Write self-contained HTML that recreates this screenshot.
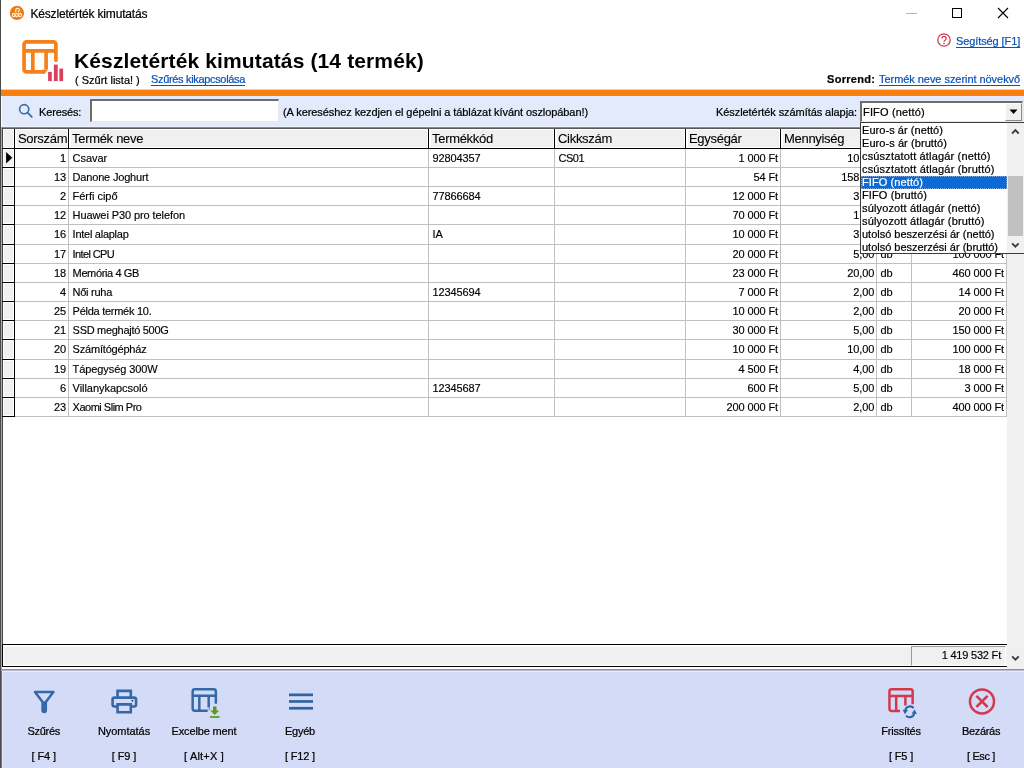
<!DOCTYPE html>
<html>
<head>
<meta charset="utf-8">
<title>Készletérték kimutatás</title>
<style>
*{box-sizing:border-box;margin:0;padding:0}
html,body{width:1024px;height:768px;overflow:hidden;background:#fff}
body{font-family:"Liberation Sans",sans-serif;font-size:11px;color:#000;position:relative}
.a{position:absolute}
.t{position:absolute;white-space:pre;line-height:14px;height:14px;-webkit-text-stroke:0.22px}
.lnk{color:#0b52b8;text-decoration:underline;text-underline-offset:1.5px}
/* grid */
#grid{position:absolute;left:2px;top:127px;width:1022px;height:543px;background:#fff}
.hl{position:absolute;left:13px;height:1px;background:#c0c0c0;width:992px}
.vl{position:absolute;top:22px;width:1px;background:#c0c0c0;height:268px}
.hd{position:absolute;top:1px;height:20px;background:#f0f0f0;font-size:13px;line-height:20px;padding-left:3px;white-space:pre;border-right:1px solid #000;border-left:1px solid #fff;border-top:1px solid #fff}
.c{position:absolute;white-space:pre;font-size:11px;line-height:14px;height:14px;-webkit-text-stroke:0.15px}
.r{text-align:right}
.ind{position:absolute;left:0;width:12px;background:#f0f0f0;border-left:1px solid #fff;border-top:1px solid #fff}
.dd{position:absolute;left:1px;white-space:pre;font-size:11px;line-height:13px;height:13px;-webkit-text-stroke:0.22px}
.bt{position:absolute;white-space:pre;font-size:11px;line-height:14px;height:14px;text-align:center;width:100px;-webkit-text-stroke:0.22px}
</style>
</head>
<body>
<div id="w" style="position:absolute;left:0;top:0;width:1024px;height:768px;will-change:transform">
<!-- window left border -->
<div class="a" style="left:0;top:0;width:1px;height:768px;background:#4a4a4a"></div>

<!-- title bar -->
<svg class="a" style="left:6px;top:2px" width="24" height="24" viewBox="6 2 24 24">
  <circle cx="16.950" cy="12.950" r="7.150" fill="#e87d18"/>
  <g fill="none" stroke="#fff4cf" stroke-width="1.150">
    <path d="M15.800 12.300V9.600a1.300 1.300 0 0 1 1.300-1.300h.6a1.700 1.700 0 0 1 1.200 2.900l-1 1.100"/>
    <ellipse cx="13.700" cy="15" rx="1.350" ry="1.700"/><ellipse cx="16.900" cy="15.100" rx="1.350" ry="1.600"/><ellipse cx="20.100" cy="15" rx="1.350" ry="1.700"/>
  </g>
</svg>
<div class="t" style="left:30.400px;top:7px;font-size:12px;line-height:15px;height:15px;letter-spacing:-0.17px">Készletérték kimutatás</div>
<div class="a" style="left:906px;top:13px;width:11px;height:1px;background:#b5b5b5"></div>
<div class="a" style="left:952px;top:8px;width:10px;height:10px;border:1px solid #000"></div>
<svg class="a" style="left:997px;top:7px" width="12" height="12" viewBox="0 0 12 12"><path d="M1 1l10 10M11 1L1 11" stroke="#000" stroke-width="1.1" fill="none"/></svg>

<!-- header -->
<svg class="a" style="left:16px;top:34px" width="56" height="56" viewBox="16 34 56 56">
  <g fill="none" stroke="#f6811a" stroke-width="3.7" stroke-linecap="round" stroke-linejoin="round">
    <path d="M55.9 60.200V44.300a2.500 2.500 0 0 0-2.500-2.500H26.550a2.500 2.500 0 0 0-2.500 2.500V69.400a2.500 2.500 0 0 0 2.500 2.500H43"/>
    <path d="M24.500 50.800H55.500M32.800 51V71.500M46.100 51V69.500" stroke-linecap="butt"/>
    <path d="M42.500 73.750h2.300l3.150-4.250h-5.450z" fill="#f6811a" stroke="none"/>
  </g>
  <rect x="48.100" y="71.900" width="3.700" height="9.200" fill="#d8405c"/>
  <rect x="53.900" y="64.600" width="3.800" height="16.500" fill="#d8405c"/>
  <rect x="59.400" y="68.600" width="3.700" height="12.500" fill="#d8405c"/>
</svg>
<div class="t" style="left:74px;top:48px;font-size:21px;font-weight:bold;line-height:26px;height:26px;letter-spacing:0.13px;-webkit-text-stroke:0">Készletérték kimutatás (14 termék)</div>
<div class="t" style="left:75px;top:73px">( Szűrt lista! )</div>
<div class="t lnk" style="left:151px;top:72px;letter-spacing:-0.33px">Szűrés kikapcsolása</div>
<svg class="a" style="left:936px;top:32px" width="16" height="16" viewBox="0 0 16 16">
  <circle cx="8" cy="8" r="6.2" fill="none" stroke="#d23a4c" stroke-width="1.3"/>
  <path d="M5.9 6.4a2.1 2.1 0 1 1 3.2 1.8c-.7.4-1.1.8-1.1 1.6" fill="none" stroke="#d23a4c" stroke-width="1.3"/>
  <rect x="7.3" y="10.8" width="1.4" height="1.4" fill="#d23a4c"/>
</svg>
<div class="t lnk" style="left:956px;top:34px;letter-spacing:-0.1px">Segítség [F1]</div>
<div class="t" style="left:827px;top:72px;font-weight:bold;letter-spacing:0.3px">Sorrend:</div>
<div class="t lnk" style="left:879px;top:72px;letter-spacing:-0.05px">Termék neve szerint növekvő</div>

<!-- orange bar -->
<div class="a" style="left:1px;top:89px;width:1023px;height:1px;background:#fccf9f"></div>
<div class="a" style="left:1px;top:90px;width:1023px;height:6px;background:#f9800f"></div>

<!-- search panel -->
<div class="a" style="left:2px;top:96px;width:1022px;height:31px;background:#e3eafb"></div>
<svg class="a" style="left:17px;top:102px" width="18" height="18" viewBox="0 0 18 18">
  <circle cx="7.2" cy="7.2" r="4.6" fill="none" stroke="#3a6ea8" stroke-width="1.6"/>
  <path d="M10.6 10.6l4.2 4.2" stroke="#3a6ea8" stroke-width="1.8" stroke-linecap="round"/>
</svg>
<div class="t" style="left:39px;top:105px;letter-spacing:-0.15px">Keresés:</div>
<div class="a" style="left:90px;top:99px;width:189px;height:23px;background:#fff;border-top:2px solid #6d6d6d;border-left:2px solid #6d6d6d;border-right:1px solid #e8e8e8;border-bottom:1px solid #e8e8e8"></div>
<div class="t" style="left:283px;top:105px;letter-spacing:-0.08px">(A kereséshez kezdjen el gépelni a táblázat kívánt oszlopában!)</div>
<div class="t" style="left:716px;top:105px;letter-spacing:-0.07px">Készletérték számítás alapja:</div>
<!-- combo -->
<div class="a" style="left:860px;top:101px;width:163px;height:21px;background:#fff;border-top:2px solid #6d6d6d;border-left:2px solid #6d6d6d;border-right:1px solid #e8e8e8;border-bottom:1px solid #e8e8e8"></div>
<div class="t" style="left:863px;top:105px;font-size:11px;letter-spacing:0.16px">FIFO (nettó)</div>
<div class="a" style="left:1005px;top:103px;width:17px;height:18px;background:#f0f0f0;border:1px solid #fdfdfd;border-right-color:#8a8a8a;border-bottom-color:#8a8a8a"></div>
<svg class="a" style="left:1009px;top:109px" width="9" height="6" viewBox="0 0 9 6"><path d="M0.5 0.5h8L4.5 5z" fill="#000"/></svg>

<div class="a" style="left:1px;top:127px;width:1023px;height:543px;background:#fff"></div>
<div class="a" style="left:1px;top:126px;width:1023px;height:1px;background:#eef2fe"></div>
<div class="a" style="left:1px;top:127px;width:1023px;height:1px;background:#868a92"></div>
<div class="a" style="left:1px;top:128px;width:1023px;height:1px;background:#56585e"></div>
<div class="a" style="left:1px;top:127px;width:1px;height:543px;background:#a8a8a8"></div>
<div class="a" style="left:2px;top:128px;width:1px;height:541px;background:#444"></div>
<div class="a" style="left:1007px;top:129px;width:17px;height:540px;background:#f0f0f0"></div>
<svg class="a" style="left:1010px;top:653px" width="11" height="9" viewBox="0 0 11 9"><path d="M2.100 3.300L5.400 6.700l3.300-3.400" fill="none" stroke="#404040" stroke-width="1.900"/></svg>
<div class="a" style="left:3px;top:129px;width:11px;height:19px;background:#f0f0f0;border-left:1px solid #fff;border-top:1px solid #fff;border-right:1px solid #fff;border-bottom:1px solid #fff"></div>
<div class="a" style="left:14px;top:129px;width:1px;height:20px;background:#000"></div>
<div class="a" style="left:15px;top:129px;width:53px;height:19px;background:#f0f0f0;border-left:2px solid #fff;border-top:1px solid #fff;border-right:1px solid #fff;border-bottom:1px solid #fff"></div>
<div class="a" style="left:68px;top:129px;width:1px;height:20px;background:#000"></div>
<div class="t" style="left:18px;top:131px;font-size:13px;line-height:16px;height:16px;letter-spacing:-0.3px;-webkit-text-stroke:0.1px">Sorszám</div>
<div class="a" style="left:69px;top:129px;width:359px;height:19px;background:#f0f0f0;border-left:2px solid #fff;border-top:1px solid #fff;border-right:1px solid #fff;border-bottom:1px solid #fff"></div>
<div class="a" style="left:428px;top:129px;width:1px;height:20px;background:#000"></div>
<div class="t" style="left:72px;top:131px;font-size:13px;line-height:16px;height:16px;letter-spacing:-0.3px;-webkit-text-stroke:0.1px">Termék neve</div>
<div class="a" style="left:429px;top:129px;width:125px;height:19px;background:#f0f0f0;border-left:2px solid #fff;border-top:1px solid #fff;border-right:1px solid #fff;border-bottom:1px solid #fff"></div>
<div class="a" style="left:554px;top:129px;width:1px;height:20px;background:#000"></div>
<div class="t" style="left:432px;top:131px;font-size:13px;line-height:16px;height:16px;letter-spacing:-0.3px;-webkit-text-stroke:0.1px">Termékkód</div>
<div class="a" style="left:555px;top:129px;width:130px;height:19px;background:#f0f0f0;border-left:2px solid #fff;border-top:1px solid #fff;border-right:1px solid #fff;border-bottom:1px solid #fff"></div>
<div class="a" style="left:685px;top:129px;width:1px;height:20px;background:#000"></div>
<div class="t" style="left:558px;top:131px;font-size:13px;line-height:16px;height:16px;letter-spacing:-0.3px;-webkit-text-stroke:0.1px">Cikkszám</div>
<div class="a" style="left:686px;top:129px;width:94px;height:19px;background:#f0f0f0;border-left:2px solid #fff;border-top:1px solid #fff;border-right:1px solid #fff;border-bottom:1px solid #fff"></div>
<div class="a" style="left:780px;top:129px;width:1px;height:20px;background:#000"></div>
<div class="t" style="left:689px;top:131px;font-size:13px;line-height:16px;height:16px;letter-spacing:-0.3px;-webkit-text-stroke:0.1px">Egységár</div>
<div class="a" style="left:781px;top:129px;width:95px;height:19px;background:#f0f0f0;border-left:2px solid #fff;border-top:1px solid #fff;border-right:1px solid #fff;border-bottom:1px solid #fff"></div>
<div class="a" style="left:876px;top:129px;width:1px;height:20px;background:#000"></div>
<div class="t" style="left:784px;top:131px;font-size:13px;line-height:16px;height:16px;letter-spacing:-0.3px;-webkit-text-stroke:0.1px">Mennyiség</div>
<div class="a" style="left:877px;top:129px;width:34px;height:19px;background:#f0f0f0;border-left:2px solid #fff;border-top:1px solid #fff;border-right:1px solid #fff;border-bottom:1px solid #fff"></div>
<div class="a" style="left:911px;top:129px;width:1px;height:20px;background:#000"></div>
<div class="a" style="left:912px;top:129px;width:94px;height:19px;background:#f0f0f0;border-left:2px solid #fff;border-top:1px solid #fff;border-right:1px solid #fff;border-bottom:1px solid #fff"></div>
<div class="a" style="left:1006px;top:129px;width:1px;height:20px;background:#000"></div>
<div class="t" style="left:915px;top:131px;font-size:13px;line-height:16px;height:16px;letter-spacing:-0.3px;-webkit-text-stroke:0.1px">Készletérték</div>
<div class="a" style="left:2px;top:148px;width:1005px;height:1px;background:#000"></div>
<div class="a" style="left:3px;top:149px;width:11px;height:18px;background:#f0f0f0;border-left:1px solid #fff;border-top:1px solid #fff;border-right:1px solid #fff;border-bottom:1px solid #fff"></div>
<div class="a" style="left:2px;top:167px;width:13px;height:1px;background:#000"></div>
<div class="a" style="left:15px;top:167px;width:992px;height:1px;background:#c0c0c0"></div>
<div class="c r" style="left:15px;width:51px;top:151px;letter-spacing:-0.12px">1</div>
<div class="c" style="left:72.6px;top:151px;letter-spacing:-0.057px">Csavar</div>
<div class="c" style="left:432.6px;top:151px;letter-spacing:-0.12px">92804357</div>
<div class="c" style="left:558.4px;top:151px;letter-spacing:-0.45px">CS01</div>
<div class="c r" style="left:686px;width:92px;top:151px;letter-spacing:-0.12px">1 000 Ft</div>
<div class="c r" style="left:781.2px;width:93.0px;top:151px;letter-spacing:-0.12px">10,00</div>
<div class="c" style="left:880.6px;top:151px;letter-spacing:-0.12px">db</div>
<div class="c r" style="left:912px;width:92px;top:151px;letter-spacing:-0.12px">10 000 Ft</div>
<div class="a" style="left:3px;top:168px;width:11px;height:18px;background:#f0f0f0;border-left:1px solid #fff;border-top:1px solid #fff;border-right:1px solid #fff;border-bottom:1px solid #fff"></div>
<div class="a" style="left:2px;top:186px;width:13px;height:1px;background:#000"></div>
<div class="a" style="left:15px;top:186px;width:992px;height:1px;background:#c0c0c0"></div>
<div class="c r" style="left:15px;width:51px;top:170px;letter-spacing:-0.12px">13</div>
<div class="c" style="left:72.6px;top:170px;letter-spacing:-0.184px">Danone Joghurt</div>
<div class="c r" style="left:686px;width:92px;top:170px;letter-spacing:-0.12px">54 Ft</div>
<div class="c r" style="left:781.2px;width:93.0px;top:170px;letter-spacing:-0.12px">158,00</div>
<div class="c" style="left:880.6px;top:170px;letter-spacing:-0.12px">db</div>
<div class="c r" style="left:912px;width:92px;top:170px;letter-spacing:-0.12px">8 532 Ft</div>
<div class="a" style="left:3px;top:187px;width:11px;height:18px;background:#f0f0f0;border-left:1px solid #fff;border-top:1px solid #fff;border-right:1px solid #fff;border-bottom:1px solid #fff"></div>
<div class="a" style="left:2px;top:205px;width:13px;height:1px;background:#000"></div>
<div class="a" style="left:15px;top:205px;width:992px;height:1px;background:#c0c0c0"></div>
<div class="c r" style="left:15px;width:51px;top:189px;letter-spacing:-0.12px">2</div>
<div class="c" style="left:72.6px;top:189px;letter-spacing:-0.034px">Férfi cipő</div>
<div class="c" style="left:432.6px;top:189px;letter-spacing:-0.12px">77866684</div>
<div class="c r" style="left:686px;width:92px;top:189px;letter-spacing:-0.12px">12 000 Ft</div>
<div class="c r" style="left:781.2px;width:93.0px;top:189px;letter-spacing:-0.12px">3,00</div>
<div class="c" style="left:880.6px;top:189px;letter-spacing:-0.12px">db</div>
<div class="c r" style="left:912px;width:92px;top:189px;letter-spacing:-0.12px">36 000 Ft</div>
<div class="a" style="left:3px;top:206px;width:11px;height:18px;background:#f0f0f0;border-left:1px solid #fff;border-top:1px solid #fff;border-right:1px solid #fff;border-bottom:1px solid #fff"></div>
<div class="a" style="left:2px;top:224px;width:13px;height:1px;background:#000"></div>
<div class="a" style="left:15px;top:224px;width:992px;height:1px;background:#c0c0c0"></div>
<div class="c r" style="left:15px;width:51px;top:208px;letter-spacing:-0.12px">12</div>
<div class="c" style="left:72.6px;top:208px;letter-spacing:-0.089px">Huawei P30 pro telefon</div>
<div class="c r" style="left:686px;width:92px;top:208px;letter-spacing:-0.12px">70 000 Ft</div>
<div class="c r" style="left:781.2px;width:93.0px;top:208px;letter-spacing:-0.12px">1,00</div>
<div class="c" style="left:880.6px;top:208px;letter-spacing:-0.12px">db</div>
<div class="c r" style="left:912px;width:92px;top:208px;letter-spacing:-0.12px">70 000 Ft</div>
<div class="a" style="left:3px;top:225px;width:11px;height:19px;background:#f0f0f0;border-left:1px solid #fff;border-top:1px solid #fff;border-right:1px solid #fff;border-bottom:1px solid #fff"></div>
<div class="a" style="left:2px;top:244px;width:13px;height:1px;background:#000"></div>
<div class="a" style="left:15px;top:244px;width:992px;height:1px;background:#c0c0c0"></div>
<div class="c r" style="left:15px;width:51px;top:227px;letter-spacing:-0.12px">16</div>
<div class="c" style="left:72.6px;top:227px;letter-spacing:-0.263px">Intel alaplap</div>
<div class="c" style="left:432.6px;top:227px;letter-spacing:-0.12px">IA</div>
<div class="c r" style="left:686px;width:92px;top:227px;letter-spacing:-0.12px">10 000 Ft</div>
<div class="c r" style="left:781.2px;width:93.0px;top:227px;letter-spacing:-0.12px">3,00</div>
<div class="c" style="left:880.6px;top:227px;letter-spacing:-0.12px">db</div>
<div class="c r" style="left:912px;width:92px;top:227px;letter-spacing:-0.12px">30 000 Ft</div>
<div class="a" style="left:3px;top:245px;width:11px;height:18px;background:#f0f0f0;border-left:1px solid #fff;border-top:1px solid #fff;border-right:1px solid #fff;border-bottom:1px solid #fff"></div>
<div class="a" style="left:2px;top:263px;width:13px;height:1px;background:#000"></div>
<div class="a" style="left:15px;top:263px;width:992px;height:1px;background:#c0c0c0"></div>
<div class="c r" style="left:15px;width:51px;top:247px;letter-spacing:-0.12px">17</div>
<div class="c" style="left:72.6px;top:247px;letter-spacing:-0.630px">Intel CPU</div>
<div class="c r" style="left:686px;width:92px;top:247px;letter-spacing:-0.12px">20 000 Ft</div>
<div class="c r" style="left:781.2px;width:93.0px;top:247px;letter-spacing:-0.12px">5,00</div>
<div class="c" style="left:880.6px;top:247px;letter-spacing:-0.12px">db</div>
<div class="c r" style="left:912px;width:92px;top:247px;letter-spacing:-0.12px">100 000 Ft</div>
<div class="a" style="left:3px;top:264px;width:11px;height:18px;background:#f0f0f0;border-left:1px solid #fff;border-top:1px solid #fff;border-right:1px solid #fff;border-bottom:1px solid #fff"></div>
<div class="a" style="left:2px;top:282px;width:13px;height:1px;background:#000"></div>
<div class="a" style="left:15px;top:282px;width:992px;height:1px;background:#c0c0c0"></div>
<div class="c r" style="left:15px;width:51px;top:266px;letter-spacing:-0.12px">18</div>
<div class="c" style="left:72.6px;top:266px;letter-spacing:-0.376px">Memória 4 GB</div>
<div class="c r" style="left:686px;width:92px;top:266px;letter-spacing:-0.12px">23 000 Ft</div>
<div class="c r" style="left:781.2px;width:93.0px;top:266px;letter-spacing:-0.12px">20,00</div>
<div class="c" style="left:880.6px;top:266px;letter-spacing:-0.12px">db</div>
<div class="c r" style="left:912px;width:92px;top:266px;letter-spacing:-0.12px">460 000 Ft</div>
<div class="a" style="left:3px;top:283px;width:11px;height:18px;background:#f0f0f0;border-left:1px solid #fff;border-top:1px solid #fff;border-right:1px solid #fff;border-bottom:1px solid #fff"></div>
<div class="a" style="left:2px;top:301px;width:13px;height:1px;background:#000"></div>
<div class="a" style="left:15px;top:301px;width:992px;height:1px;background:#c0c0c0"></div>
<div class="c r" style="left:15px;width:51px;top:285px;letter-spacing:-0.12px">4</div>
<div class="c" style="left:72.6px;top:285px;letter-spacing:-0.272px">Női ruha</div>
<div class="c" style="left:432.6px;top:285px;letter-spacing:-0.12px">12345694</div>
<div class="c r" style="left:686px;width:92px;top:285px;letter-spacing:-0.12px">7 000 Ft</div>
<div class="c r" style="left:781.2px;width:93.0px;top:285px;letter-spacing:-0.12px">2,00</div>
<div class="c" style="left:880.6px;top:285px;letter-spacing:-0.12px">db</div>
<div class="c r" style="left:912px;width:92px;top:285px;letter-spacing:-0.12px">14 000 Ft</div>
<div class="a" style="left:3px;top:302px;width:11px;height:18px;background:#f0f0f0;border-left:1px solid #fff;border-top:1px solid #fff;border-right:1px solid #fff;border-bottom:1px solid #fff"></div>
<div class="a" style="left:2px;top:320px;width:13px;height:1px;background:#000"></div>
<div class="a" style="left:15px;top:320px;width:992px;height:1px;background:#c0c0c0"></div>
<div class="c r" style="left:15px;width:51px;top:304px;letter-spacing:-0.12px">25</div>
<div class="c" style="left:72.6px;top:304px;letter-spacing:-0.266px">Példa termék 10.</div>
<div class="c r" style="left:686px;width:92px;top:304px;letter-spacing:-0.12px">10 000 Ft</div>
<div class="c r" style="left:781.2px;width:93.0px;top:304px;letter-spacing:-0.12px">2,00</div>
<div class="c" style="left:880.6px;top:304px;letter-spacing:-0.12px">db</div>
<div class="c r" style="left:912px;width:92px;top:304px;letter-spacing:-0.12px">20 000 Ft</div>
<div class="a" style="left:3px;top:321px;width:11px;height:18px;background:#f0f0f0;border-left:1px solid #fff;border-top:1px solid #fff;border-right:1px solid #fff;border-bottom:1px solid #fff"></div>
<div class="a" style="left:2px;top:339px;width:13px;height:1px;background:#000"></div>
<div class="a" style="left:15px;top:339px;width:992px;height:1px;background:#c0c0c0"></div>
<div class="c r" style="left:15px;width:51px;top:323px;letter-spacing:-0.12px">21</div>
<div class="c" style="left:72.6px;top:323px;letter-spacing:-0.294px">SSD meghajtó 500G</div>
<div class="c r" style="left:686px;width:92px;top:323px;letter-spacing:-0.12px">30 000 Ft</div>
<div class="c r" style="left:781.2px;width:93.0px;top:323px;letter-spacing:-0.12px">5,00</div>
<div class="c" style="left:880.6px;top:323px;letter-spacing:-0.12px">db</div>
<div class="c r" style="left:912px;width:92px;top:323px;letter-spacing:-0.12px">150 000 Ft</div>
<div class="a" style="left:3px;top:340px;width:11px;height:19px;background:#f0f0f0;border-left:1px solid #fff;border-top:1px solid #fff;border-right:1px solid #fff;border-bottom:1px solid #fff"></div>
<div class="a" style="left:2px;top:359px;width:13px;height:1px;background:#000"></div>
<div class="a" style="left:15px;top:359px;width:992px;height:1px;background:#c0c0c0"></div>
<div class="c r" style="left:15px;width:51px;top:342px;letter-spacing:-0.12px">20</div>
<div class="c" style="left:72.6px;top:342px;letter-spacing:-0.195px">Számítógépház</div>
<div class="c r" style="left:686px;width:92px;top:342px;letter-spacing:-0.12px">10 000 Ft</div>
<div class="c r" style="left:781.2px;width:93.0px;top:342px;letter-spacing:-0.12px">10,00</div>
<div class="c" style="left:880.6px;top:342px;letter-spacing:-0.12px">db</div>
<div class="c r" style="left:912px;width:92px;top:342px;letter-spacing:-0.12px">100 000 Ft</div>
<div class="a" style="left:3px;top:360px;width:11px;height:18px;background:#f0f0f0;border-left:1px solid #fff;border-top:1px solid #fff;border-right:1px solid #fff;border-bottom:1px solid #fff"></div>
<div class="a" style="left:2px;top:378px;width:13px;height:1px;background:#000"></div>
<div class="a" style="left:15px;top:378px;width:992px;height:1px;background:#c0c0c0"></div>
<div class="c r" style="left:15px;width:51px;top:362px;letter-spacing:-0.12px">19</div>
<div class="c" style="left:72.6px;top:362px;letter-spacing:-0.094px">Tápegység 300W</div>
<div class="c r" style="left:686px;width:92px;top:362px;letter-spacing:-0.12px">4 500 Ft</div>
<div class="c r" style="left:781.2px;width:93.0px;top:362px;letter-spacing:-0.12px">4,00</div>
<div class="c" style="left:880.6px;top:362px;letter-spacing:-0.12px">db</div>
<div class="c r" style="left:912px;width:92px;top:362px;letter-spacing:-0.12px">18 000 Ft</div>
<div class="a" style="left:3px;top:379px;width:11px;height:18px;background:#f0f0f0;border-left:1px solid #fff;border-top:1px solid #fff;border-right:1px solid #fff;border-bottom:1px solid #fff"></div>
<div class="a" style="left:2px;top:397px;width:13px;height:1px;background:#000"></div>
<div class="a" style="left:15px;top:397px;width:992px;height:1px;background:#c0c0c0"></div>
<div class="c r" style="left:15px;width:51px;top:381px;letter-spacing:-0.12px">6</div>
<div class="c" style="left:72.6px;top:381px;letter-spacing:-0.048px">Villanykapcsoló</div>
<div class="c" style="left:432.6px;top:381px;letter-spacing:-0.12px">12345687</div>
<div class="c r" style="left:686px;width:92px;top:381px;letter-spacing:-0.12px">600 Ft</div>
<div class="c r" style="left:781.2px;width:93.0px;top:381px;letter-spacing:-0.12px">5,00</div>
<div class="c" style="left:880.6px;top:381px;letter-spacing:-0.12px">db</div>
<div class="c r" style="left:912px;width:92px;top:381px;letter-spacing:-0.12px">3 000 Ft</div>
<div class="a" style="left:3px;top:398px;width:11px;height:18px;background:#f0f0f0;border-left:1px solid #fff;border-top:1px solid #fff;border-right:1px solid #fff;border-bottom:1px solid #fff"></div>
<div class="a" style="left:2px;top:416px;width:13px;height:1px;background:#000"></div>
<div class="a" style="left:15px;top:416px;width:992px;height:1px;background:#c0c0c0"></div>
<div class="c r" style="left:15px;width:51px;top:400px;letter-spacing:-0.12px">23</div>
<div class="c" style="left:72.6px;top:400px;letter-spacing:-0.493px">Xaomi Slim Pro</div>
<div class="c r" style="left:686px;width:92px;top:400px;letter-spacing:-0.12px">200 000 Ft</div>
<div class="c r" style="left:781.2px;width:93.0px;top:400px;letter-spacing:-0.12px">2,00</div>
<div class="c" style="left:880.6px;top:400px;letter-spacing:-0.12px">db</div>
<div class="c r" style="left:912px;width:92px;top:400px;letter-spacing:-0.12px">400 000 Ft</div>
<div class="a" style="left:14px;top:149px;width:1px;height:268px;background:#000"></div>
<div class="a" style="left:68px;top:149px;width:1px;height:268px;background:#c0c0c0"></div>
<div class="a" style="left:428px;top:149px;width:1px;height:268px;background:#c0c0c0"></div>
<div class="a" style="left:554px;top:149px;width:1px;height:268px;background:#c0c0c0"></div>
<div class="a" style="left:685px;top:149px;width:1px;height:268px;background:#c0c0c0"></div>
<div class="a" style="left:780px;top:149px;width:1px;height:268px;background:#c0c0c0"></div>
<div class="a" style="left:876px;top:149px;width:1px;height:268px;background:#c0c0c0"></div>
<div class="a" style="left:911px;top:149px;width:1px;height:268px;background:#c0c0c0"></div>
<div class="a" style="left:1006px;top:149px;width:1px;height:268px;background:#c0c0c0"></div>
<svg class="a" style="left:5px;top:151px" width="9" height="14" viewBox="0 0 9 14"><path d="M1.100 0.900v11.600l6.200-5.800z" fill="#000"/></svg>
<div class="a" style="left:2px;top:644px;width:1005px;height:1px;background:#000"></div>
<div class="a" style="left:2px;top:645px;width:1005px;height:21px;background:#f0f0f0;border-left:1px solid #000;box-shadow:inset 1px 2px 0 #fff, inset 0 -1px 0 #fff"></div>
<div class="a" style="left:2px;top:666px;width:1005px;height:1px;background:#000"></div>
<div class="a" style="left:2px;top:667px;width:1005px;height:2px;background:#fff"></div>
<div class="a" style="left:1px;top:669px;width:1023px;height:1px;background:#8f9195"></div>
<div class="a" style="left:911px;top:646px;width:95px;height:20px;background:#f0f0f0;border-left:1px solid #9a9a9a;border-top:1px solid #9a9a9a;border-bottom:1px solid #fff;border-right:1px solid #fff"></div>
<div class="c r" style="left:912px;width:89px;top:648px;letter-spacing:-0.2px">1 419 532 Ft</div>
<div class="a" style="left:860px;top:122px;width:165px;height:132px;background:#fff;border:1px solid #3c3c3c"></div>
<div class="a" style="left:1007px;top:123px;width:17px;height:130px;background:#f0f0f0"></div>
<div class="a" style="left:1008px;top:176px;width:15px;height:60px;background:#c1c1c1"></div>
<svg class="a" style="left:1010px;top:127px" width="11" height="9" viewBox="0 0 11 9"><path d="M2.100 6.500L5.400 3.100l3.300 3.400" fill="none" stroke="#404040" stroke-width="1.900"/></svg>
<svg class="a" style="left:1010px;top:240px" width="11" height="9" viewBox="0 0 11 9"><path d="M2.100 3.300L5.400 6.700l3.300-3.400" fill="none" stroke="#404040" stroke-width="1.900"/></svg>
<div class="dd" style="left:862px;top:124px;letter-spacing:0.054px">Euro-s ár (nettó)</div>
<div class="dd" style="left:862px;top:137px;letter-spacing:0.069px">Euro-s ár (bruttó)</div>
<div class="dd" style="left:862px;top:150px;letter-spacing:0.162px">csúsztatott átlagár (nettó)</div>
<div class="dd" style="left:862px;top:163px;letter-spacing:0.169px">csúsztatott átlagár (bruttó)</div>
<div class="a" style="left:861px;top:176px;width:146px;height:13px;background:#0a6ad6;outline:1px dotted #7fa8e0;outline-offset:-1px"></div>
<div class="dd" style="left:862px;top:176px;letter-spacing:0.092px;color:#fff">FIFO (nettó)</div>
<div class="dd" style="left:862px;top:189px;letter-spacing:0.111px">FIFO (bruttó)</div>
<div class="dd" style="left:862px;top:202px;letter-spacing:0.142px">súlyozott átlagár (nettó)</div>
<div class="dd" style="left:862px;top:215px;letter-spacing:0.15px">súlyozott átlagár (bruttó)</div>
<div class="dd" style="left:862px;top:228px;letter-spacing:-0.006px">utolsó beszerzési ár (nettó)</div>
<div class="dd" style="left:862px;top:241px;letter-spacing:-0.012px">utolsó beszerzési ár (bruttó)</div>

<!-- bottom toolbar -->
<div class="a" style="left:1px;top:670px;width:1023px;height:98px;background:#d3dbf7"></div>
<div class="a" style="left:1px;top:670px;width:1px;height:98px;background:#777a86"></div>
<div class="a" style="left:2px;top:670px;width:1px;height:98px;background:#e2e6fa"></div>
<div class="a" style="left:1px;top:670px;width:1023px;height:1px;background:#b6bad2"></div>
<div class="a" style="left:2px;top:671px;width:1022px;height:1px;background:#e6eafc"></div>
<svg class="a" style="left:0;top:670px" width="1024" height="98" viewBox="0 670 1024 98"><path d="M35 692h18.400L45.800 702v8.300a1.600 1.600 0 0 1-3.200 0V702z" fill="none" stroke="#3468a8" stroke-width="2.500" stroke-linejoin="round"/><rect x="42.300" y="701.500" width="3.800" height="9.500" rx="1.300" fill="#3468a8"/><g fill="none" stroke="#3468a8" stroke-width="2.600" stroke-linejoin="miter"><path d="M117.550 697V690.850h13.250V697"/><path d="M117.550 706.500H114.600a2 2 0 0 1-2-2V699.600a2 2 0 0 1 2-2H134.050a2 2 0 0 1 2 2v4.900a2 2 0 0 1-2 2H130.800"/><path d="M117.550 704.400h13.250v7.800H117.550z"/></g><circle cx="132.400" cy="700.800" r="0.950" fill="#1d3f6a"/><g fill="none" stroke="#3468a8" stroke-width="2.5" stroke-linejoin="round"><path d="M215.85 703.70V691.45a2.2 2.2 0 0 0-2.2-2.2H194.85a2.2 2.2 0 0 0-2.2 2.2V708.55a2.2 2.2 0 0 0 2.2 2.2H207.50"/><path d="M192.65 695.80H215.85M199.30 695.80V710.75M208.70 695.80V707.50"/></g><path d="M207.500 712v-2.500h2.300v-2.500z" fill="#3468a8"/><path d="M213 706.600h3.500v3.800h2.700L214.750 714.900 210.300 710.400h2.700z" fill="#5f9426"/><rect x="210" y="716.150" width="9.500" height="1.700" fill="#5f9426"/><rect x="289" y="693.500" width="24" height="2.700" fill="#2f64a2"/><rect x="289" y="700.100" width="24" height="2.700" fill="#2f64a2"/><rect x="289" y="706.900" width="24" height="2.700" fill="#2f64a2"/><g fill="none" stroke="#d23a4c" stroke-width="2.5" stroke-linejoin="round"><path d="M912.65 704.20V691.35a2.2 2.2 0 0 0-2.2-2.2H891.65a2.2 2.2 0 0 0-2.2 2.2V708.75a2.2 2.2 0 0 0 2.2 2.2H900.00"/><path d="M889.45 696.10H912.65M896.20 696.10V710.95M905.40 696.10V705.50"/></g><circle cx="909.800" cy="711.800" r="7.300" fill="#d3dbf7"/><g fill="none" stroke="#2f64a2" stroke-width="2.100"><path d="M905.300 710.300a4.800 4.800 0 0 1 8.300-2.300"/><path d="M914.300 713.300a4.800 4.800 0 0 1-8.300 2.300"/></g><path d="M902.600 709.700l5.400.3-3 4.200z" fill="#2f64a2"/><path d="M917 713.900l-5.400-.3 3-4.200z" fill="#2f64a2"/><circle cx="982" cy="701.400" r="12" fill="none" stroke="#d23a4c" stroke-width="2.500"/><path d="M976.400 695.800l11.200 11.200M987.600 695.800l-11.200 11.200" stroke="#d23a4c" stroke-width="2.500" fill="none"/></svg>
<div class="bt" style="left:-6.299999999999997px;top:724px;letter-spacing:-0.289px">Szűrés</div>
<div class="bt" style="left:-6.299999999999997px;top:749px;letter-spacing:-0.094px">[ F4 ]</div>
<div class="bt" style="left:74px;top:724px;letter-spacing:-0.041px">Nyomtatás</div>
<div class="bt" style="left:74px;top:749px;letter-spacing:-0.094px">[ F9 ]</div>
<div class="bt" style="left:154px;top:724px;letter-spacing:-0.137px">Excelbe ment</div>
<div class="bt" style="left:154px;top:749px;letter-spacing:0.198px">[ Alt+X ]</div>
<div class="bt" style="left:250px;top:724px;letter-spacing:-0.238px">Egyéb</div>
<div class="bt" style="left:250px;top:749px;letter-spacing:-0.168px">[ F12 ]</div>
<div class="bt" style="left:851px;top:724px;letter-spacing:-0.229px">Frissítés</div>
<div class="bt" style="left:851px;top:749px;letter-spacing:-0.144px">[ F5 ]</div>
<div class="bt" style="left:931px;top:724px;letter-spacing:-0.308px">Bezárás</div>
<div class="bt" style="left:931px;top:749px;letter-spacing:-0.394px">[ Esc ]</div>
</div>
</body>
</html>
